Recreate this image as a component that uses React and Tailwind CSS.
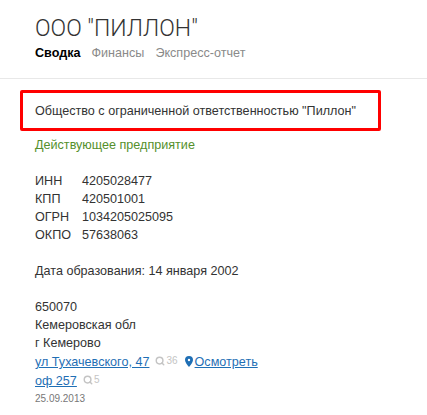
import { Search } from "lucide-react";

function Count({ value }) {
  return (
    <span className="inline-flex items-center gap-px ml-[6px] text-[10px] text-[#c4c4c4]">
      <Search size={10} strokeWidth={3.5} />
      {value}
    </span>
  );
}

function Pin() {
  return (
    <svg width="8" height="11" viewBox="0 0 8 11" className="inline ml-[7px] mr-[2px] align-[-1px]">
      <path fillRule="evenodd" fill="#1f6fb5" d="M4 0a4 4 0 0 1 4 4c0 2.500-2.500 5-4 7C2.500 9 0 6.500 0 4a4 4 0 0 1 4-4zm0 2.800a1.200 1.200 0 1 0 0 2.400 1.200 1.200 0 0 0 0-2.400z" />
    </svg>
  );
}

export default function App() {
  return (
    <div className="h-[415px] overflow-hidden bg-white text-[#333] text-[12.6px] leading-[18px] font-['Liberation_Sans',sans-serif]">
      <div className="px-[35px] pt-[14px] h-[79px] border-b border-[#e8e8e8]">
        <h1 className="text-[23px] leading-[30px] font-light font-['Roboto',sans-serif]">ООО "ПИЛЛОН"</h1>
        <nav className="flex gap-[11px]">
          <span className="font-bold text-black">Сводка</span>
          <span className="text-[#8a8a8a]">Финансы</span>
          <span className="text-[#8a8a8a]">Экспресс-отчет</span>
        </nav>
      </div>
      <div className="pl-[20px] pt-[11px]">
        <div className="w-[361px] h-[41px] pl-[12px] flex items-center border-[3px] border-[#ff0000] rounded-[2px]">
          Общество с ограниченной ответственностью "Пиллон"
        </div>
      </div>
      <div className="pl-[35px]">
        <p className="mt-[5px] text-[#558f2b]">Действующее предприятие</p>
        <div className="mt-[18px] grid grid-cols-[47px_1fr]">
          <span>ИНН</span><span>4205028477</span>
          <span>КПП</span><span>420501001</span>
          <span>ОГРН</span><span>1034205025095</span>
          <span>ОКПО</span><span>57638063</span>
        </div>
        <p className="mt-[18px]">Дата образования: 14 января 2002</p>
        <div className="mt-[18px]">
          <p>650070</p>
          <p>Кемеровская обл</p>
          <p>г Кемерово</p>
          <p>
            <a className="text-[#1f6fb5] underline">ул Тухачевского, 47</a>
            <Count value="36" />
            <Pin />
            <a className="text-[#1f6fb5] underline">Осмотреть</a>
          </p>
          <p>
            <a className="text-[#1f6fb5] underline">оф 257</a>
            <Count value="5" />
          </p>
          <p className="text-[10px] text-[#777]">25.09.2013</p>
        </div>
      </div>
    </div>
  );
}
